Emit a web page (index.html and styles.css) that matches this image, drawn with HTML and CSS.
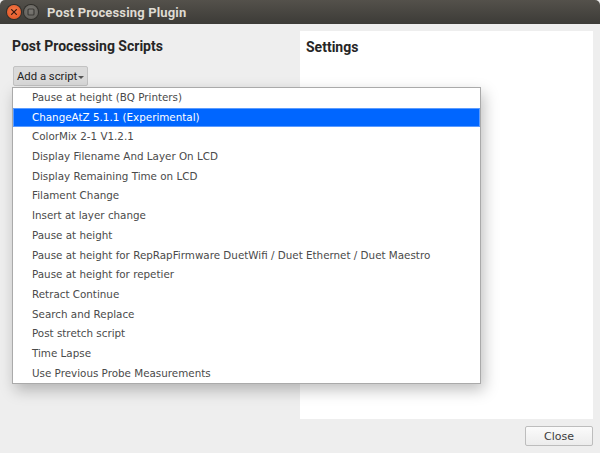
FILE: index.html
```html
<!DOCTYPE html>
<html>
<head>
<meta charset="utf-8">
<link rel="stylesheet" href="styles.css">
</head>
<body>
<div class="window">
  <div class="titlebar">
    <span class="tb-btn tb-close">
      <svg width="14" height="14" viewBox="0 0 14 14"><path d="M4.6 4.6 L9.4 9.4 M9.4 4.6 L4.6 9.4" stroke="#3a1a10" stroke-width="1.3" stroke-linecap="round"/></svg>
    </span>
    <span class="tb-btn tb-min">
      <svg width="14" height="14" viewBox="0 0 14 14"><rect x="4" y="4" width="6" height="6" rx="1" fill="none" stroke="#3c3b37" stroke-width="1.2"/></svg>
    </span>
    <span class="tb-title">Post Processing Plugin</span>
  </div>
  <div class="content">
    <div class="left">
      <h1 class="heading">Post Processing Scripts</h1>
      <div class="add-btn">Add a script<span class="caret"></span></div>
    </div>
    <div class="panel">
      <h1 class="heading settings">Settings</h1>
    </div>
  </div>
  <div class="footer">
    <div class="close-btn">Close</div>
  </div>
  <ul class="menu">
    <li>Pause at height (BQ Printers)</li>
    <li class="active">ChangeAtZ 5.1.1 (Experimental)</li>
    <li>ColorMix 2-1 V1.2.1</li>
    <li>Display Filename And Layer On LCD</li>
    <li>Display Remaining Time on LCD</li>
    <li>Filament Change</li>
    <li>Insert at layer change</li>
    <li>Pause at height</li>
    <li>Pause at height for RepRapFirmware DuetWifi / Duet Ethernet / Duet Maestro</li>
    <li>Pause at height for repetier</li>
    <li>Retract Continue</li>
    <li>Search and Replace</li>
    <li>Post stretch script</li>
    <li>Time Lapse</li>
    <li>Use Previous Probe Measurements</li>
  </ul>
</div>
</body>
</html>
```
FILE: styles.css
```css
html, body {
  margin: 0;
  padding: 0;
  background: #eeeeee;
}
.window {
  position: relative;
  width: 600px;
  height: 453px;
  display: flex;
  flex-direction: column;
  background: #eeeeee;
  font-family: "DejaVu Sans", sans-serif;
  overflow: hidden;
}
.titlebar {
  height: 24px;
  flex: none;
  display: flex;
  align-items: center;
  background: linear-gradient(#54514b, #3c3b37);
  border-radius: 5px 5px 0 0;
  padding-left: 7px;
}
.tb-btn {
  width: 14px;
  height: 14px;
  border-radius: 50%;
  display: flex;
  margin-right: 3px;
}
.tb-close {
  background: radial-gradient(circle at 50% 40%, #f27a4a, #e2501e);
  box-shadow: 0 0 0 1px #2f2e2a;
}
.tb-min {
  background: radial-gradient(circle at 50% 40%, #7a7873, #5d5b56);
  box-shadow: 0 0 0 1px #2f2e2a;
}
.tb-title {
  margin-left: 6px;
  font-family: Roboto, "DejaVu Sans", sans-serif;
  font-weight: 700;
  font-size: 13px;
  color: #dfdbd2;
  letter-spacing: 0.15px;
}
.content {
  flex: 1;
  display: flex;
  padding: 7px 7px 0 12px;
}
.left {
  width: 288px;
  flex: none;
}
.heading {
  margin: 6px 0 0 0;
  font-family: Roboto, "DejaVu Sans", sans-serif;
  font-weight: 700;
  font-size: 14px;
  line-height: 18px;
  color: #262626;
}
.add-btn {
  margin-top: 11px;
  display: inline-flex;
  align-items: center;
  height: 18px;
  padding: 0 3px 0 3px;
  background: #dadada;
  border: 1px solid #c2c2c2;
  border-radius: 2px;
  font-family: Roboto, "DejaVu Sans", sans-serif;
  font-size: 11.3px;
  color: #222;
  margin-left: 1px;
}
.caret {
  width: 0;
  height: 0;
  border-left: 3px solid transparent;
  border-right: 3px solid transparent;
  border-top: 3px solid #555;
  margin-left: 1px;
  margin-top: 2px;
}
.panel {
  flex: 1;
  background: #ffffff;
  height: 388px;
}
.settings {
  margin: 7px 0 0 6px;
}
.footer {
  height: 34px;
  flex: none;
  display: flex;
  justify-content: flex-end;
  align-items: flex-start;
  padding: 7px 7px 0 0;
  box-sizing: border-box;
}
.close-btn {
  width: 66px;
  height: 18px;
  border: 1px solid #bdbdbd;
  border-radius: 2px;
  background: linear-gradient(#fbfbfb, #ececec);
  font-size: 11px;
  color: #3c3c3c;
  display: flex;
  align-items: center;
  justify-content: center;
}
.menu {
  position: absolute;
  left: 12px;
  top: 87px;
  width: 467px;
  margin: 0;
  padding: 0;
  list-style: none;
  background: #ffffff;
  border: 1px solid #aaaaaa;
  box-shadow: 3px 6px 14px rgba(0,0,0,0.25);
}
.menu li {
  height: 19.7px;
  line-height: 19.7px;
  padding-left: 19px;
  font-size: 10.35px;
  color: #4a4a4a;
  white-space: nowrap;
}
.menu li.active {
  background: #0066ff;
  color: #ffffff;
  box-shadow: inset 0 0 0 1px #5b9bff;
}
```
